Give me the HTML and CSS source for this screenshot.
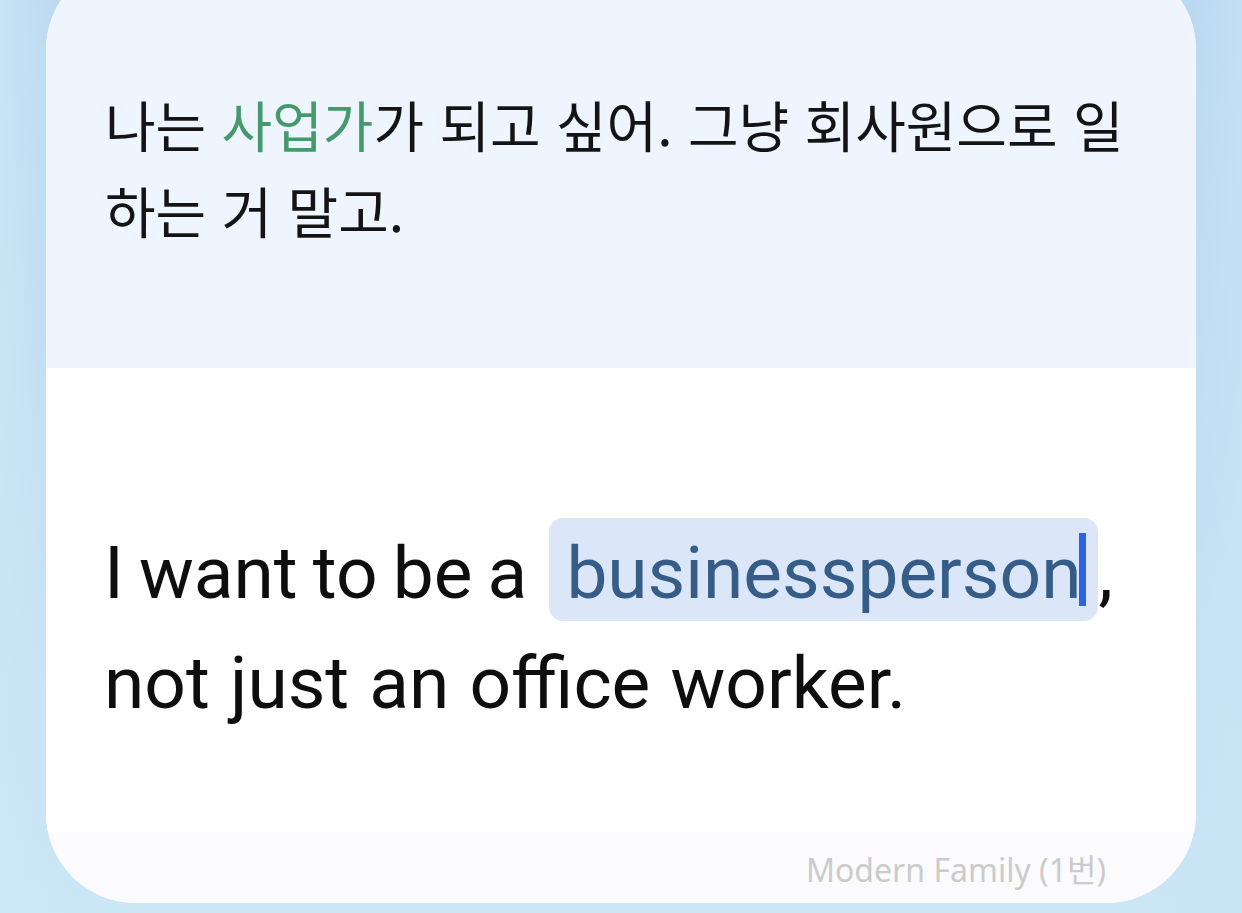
FILE: index.html
```html
<!DOCTYPE html>
<html lang="ko">
<head>
<meta charset="utf-8">
<title>Card</title>
<link rel="stylesheet" href="styles.css">
</head>
<body>
<div class="stage">
  <div class="card">
    <section class="ko">
      <p class="ko-text">나는 <span class="ko-hl">사업가</span>가 되고 싶어. 그냥 회사원으로 일<br>하는 거 말고.</p>
    </section>
    <section class="en">
      <p class="en-text"><span class="line-a">I want to be a</span> <span class="word">businessperson<span class="caret"></span></span>,<br><span class="line-b">not just an office worker.</span></p>
    </section>
    <footer class="source">Modern Family (1번)</footer>
  </div>
</div>
</body>
</html>
```
FILE: styles.css
```css
html, body {
  margin: 0;
  padding: 0;
  width: 1242px;
  height: 913px;
  overflow: hidden;
}
body {
  background: linear-gradient(180deg, #b8d6f0 0%, #c0dcf2 45%, #cbe6f5 100%);
}
.stage {
  display: flex;
  justify-content: flex-start;
  padding-left: 46px;
  height: 913px;
  background:
    linear-gradient(90deg, rgba(205,232,246,0.7) 0%, rgba(190,218,240,0) 6%, rgba(190,218,240,0) 94%, rgba(200,228,245,0.6) 100%);
}
.card {
  margin-top: -40px;
  width: 1150px;
  height: 943px;
  border-radius: 90px;
  overflow: hidden;
  display: flex;
  flex-direction: column;
  background: #ffffff;
}
.ko {
  height: 408px;
  box-sizing: border-box;
  padding: 120px 30px 0 59px;
  background: #eef5fe;
}
.ko-text {
  margin: 0;
  font-family: "Noto Sans CJK KR", "Noto Sans", sans-serif;
  font-size: 55px;
  line-height: 86px;
  color: #141414;
  white-space: nowrap;
}
.ko-hl {
  color: #459a6c;
}
.en {
  flex: 1;
  box-sizing: border-box;
  padding: 150px 30px 0 58px;
  background: #ffffff;
}
.en-text {
  margin: 0;
  font-family: Roboto, "Liberation Sans", sans-serif;
  font-size: 73px;
  line-height: 110px;
  color: #0e0e0e;
  white-space: nowrap;
}
.line-a {
  word-spacing: -3px;
}
.line-b {
  word-spacing: 2px;
}
.word {
  position: relative;
  background: #dbe7f8;
  color: #365d87;
  border-radius: 14px;
  padding: 12px 17px 5px 17px;
  margin-left: 4px;
}
.caret {
  position: absolute;
  right: 12px;
  top: 15px;
  width: 7px;
  height: 73px;
  background: #2b62e6;
}
.source {
  height: 71px;
  box-sizing: border-box;
  padding: 18px 90px 13px 0;
  text-align: right;
  font-family: "Noto Sans", "Noto Sans CJK KR", sans-serif;
  font-size: 32px;
  line-height: 40px;
  color: #cbcbcb;
  background: #fbfbfd;
}
```
